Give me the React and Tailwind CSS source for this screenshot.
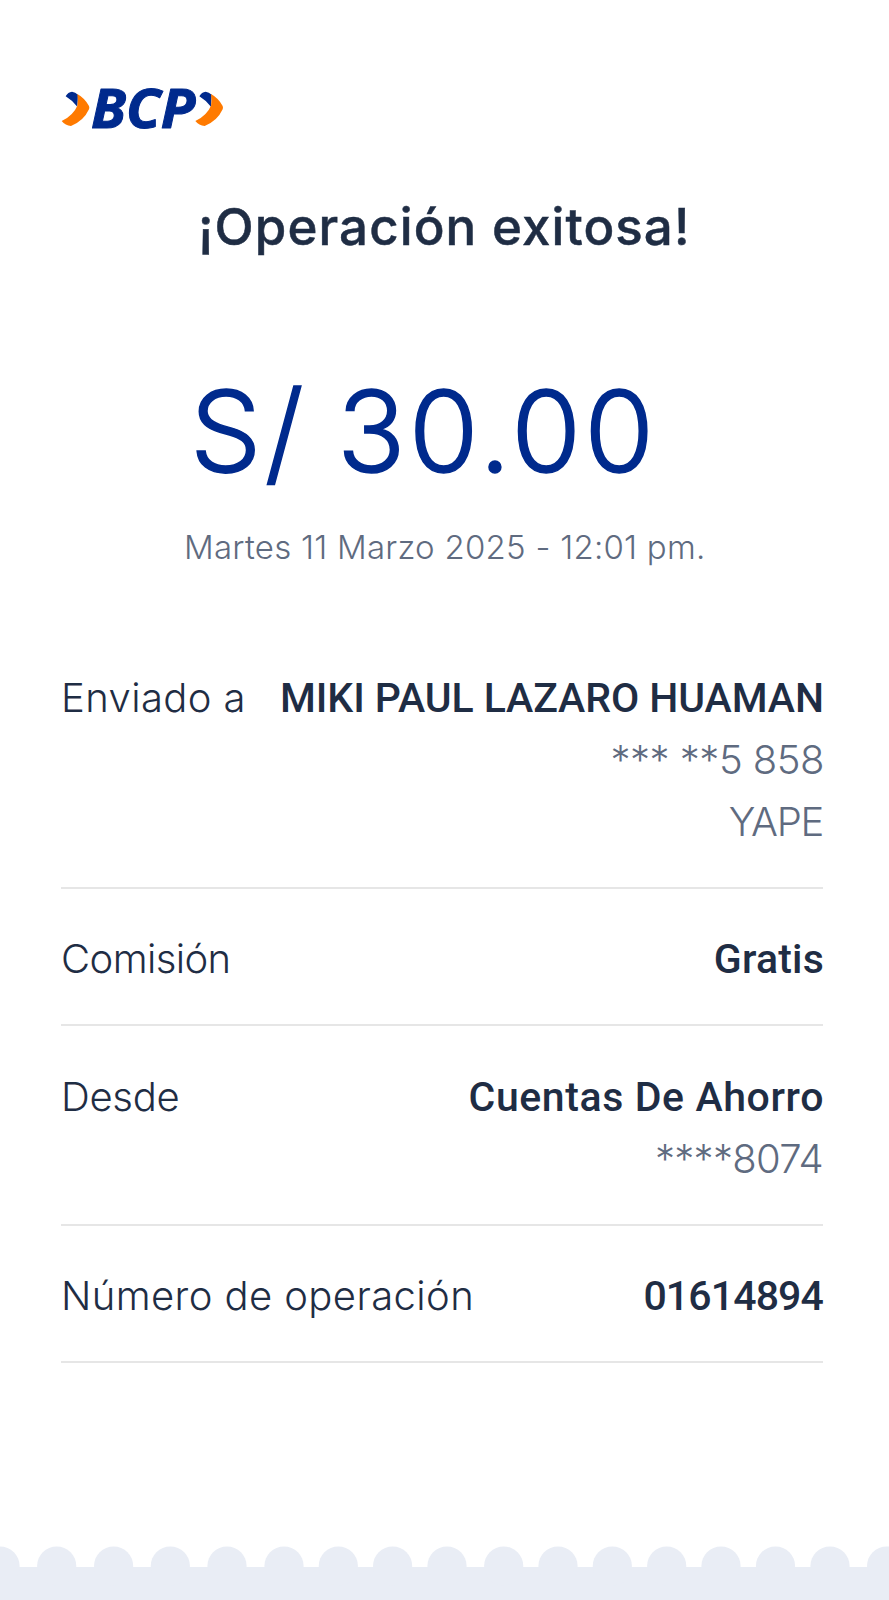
import React from 'react'

const rows = [
  {
    label: 'Enviado a',
    labelClass: 'tracking-[0.4px]',
    value: 'MIKI PAUL LAZARO HUAMAN',
    valueClass: 'tracking-[-0.07px] -mr-px',
    extra: [
      { text: '*** **5 858', className: 'tracking-[-0.5px] -mr-px' },
      { text: 'YAPE', className: 'tracking-[-1.3px]' },
    ],
    pad: 'pb-[34px]',
  },
  {
    label: 'Comisión',
    labelClass: 'tracking-[-0.6px]',
    value: 'Gratis',
    valueClass: 'tracking-[0.2px] -mr-px',
    pad: 'pt-[39px] pb-[34px]',
  },
  {
    label: 'Desde',
    labelClass: 'tracking-[-0.3px]',
    value: 'Cuentas De Ahorro',
    valueClass: 'tracking-[0.6px] -mr-px',
    extra: [{ text: '****8074', className: 'tracking-[-0.7px]' }],
    pad: 'pt-[40px] pb-[34px]',
  },
  {
    label: 'Número de operación',
    labelClass: 'tracking-[0.4px]',
    value: '01614894',
    valueClass: 'tracking-[-0.85px]',
    pad: 'pt-[39px] pb-[34px]',
  },
]

// centers of the ticket bumps
const bumps = [0, 56.7, 113.6, 170.3, 227, 284, 338.3, 392.6, 447, 503.7, 558, 612.3, 666.7, 721, 775.5, 830, 886.6]

function Arrow() {
  return (
    <>
      <path d="M47 64 Q54 51 66 50 Q76 51 84 59 L82 95 Q68 77 47 64Z" fill="#002a8d" />
      <path d="M82 57 Q104 69 117 93 Q119 98 117 103 Q101 138 63 153 Q46 152 35 138 Q70 121 82 92 Q85 74 82 57Z" fill="#ff7a00" />
    </>
  )
}

function Logo() {
  return (
    <svg viewBox="30 0 519 210" className="w-[173px] h-[70px] overflow-visible">
      <Arrow />
      <text
        x="123"
        y="160"
        fontSize="160"
        fontWeight="700"
        fontStyle="italic"
        textLength="313"
        lengthAdjust="spacingAndGlyphs"
        fill="#002a8d"
        stroke="#002a8d"
        strokeWidth="3"
        strokeLinejoin="round"
        className="font-['Open_Sans',sans-serif]"
      >
        BCP
      </text>
      <g transform="translate(401 0)">
        <Arrow />
      </g>
    </svg>
  )
}

function Row({ label, labelClass, value, valueClass, extra = [], pad }) {
  return (
    <div className={`flex justify-between border-b-2 border-[#e6e6e6] text-[40px] leading-[62px] whitespace-nowrap ${pad}`}>
      <span className={`font-light ${labelClass}`}>{label}</span>
      <div className="flex flex-col items-end">
        <span className={`font-[Roboto,sans-serif] text-[41px] leading-[62px] font-medium ${valueClass}`}>{value}</span>
        {extra.map((line) => (
          <span key={line.text} className={`font-light text-[#5f6b80] ${line.className}`}>
            {line.text}
          </span>
        ))}
      </div>
    </div>
  )
}

function App() {
  return (
    <div className="flex flex-col w-[889px] h-[1600px] overflow-hidden bg-white text-[#1f2d44] font-[Inter,sans-serif]">
      <header className="pt-[75px] pl-[60px]">
        <Logo />
      </header>

      {/* title, amount and date */}
      <h1 className="mt-[52px] pl-[198px] text-[51px] leading-[60px] font-medium tracking-[1.1px] [-webkit-text-stroke:0.5px_#1f2d44] whitespace-nowrap">
        ¡Operación exitosa!
      </h1>
      <p className="mt-[114px] pl-[190px] text-[113px] leading-[120px] font-light tracking-[3.2px] [word-spacing:-5px] [-webkit-text-stroke:1.5px_#002a8d] text-[#002a8d] whitespace-nowrap">
        S/ 30.00
      </p>
      <p className="mt-[36px] pl-[184px] text-[33px] leading-[40px] font-light tracking-[0.25px] text-[#5f6b80] whitespace-nowrap">
        Martes 11 Marzo 2025 - 12:01 pm.
      </p>

      {/* details */}
      <div className="mt-[100px] ml-[61px] mr-[66px]">
        {rows.map((row) => (
          <Row key={row.label} {...row} />
        ))}
      </div>

      {/* ticket edge */}
      <footer className="mt-auto">
        <svg viewBox="0 0 889 54" className="block w-full h-[54px]" fill="#e9edf5">
          <rect y="21" width="889" height="33" />
          {bumps.map((x) => (
            <circle key={x} cx={x} cy="20" r="19.6" />
          ))}
        </svg>
      </footer>
    </div>
  )
}

export default App
